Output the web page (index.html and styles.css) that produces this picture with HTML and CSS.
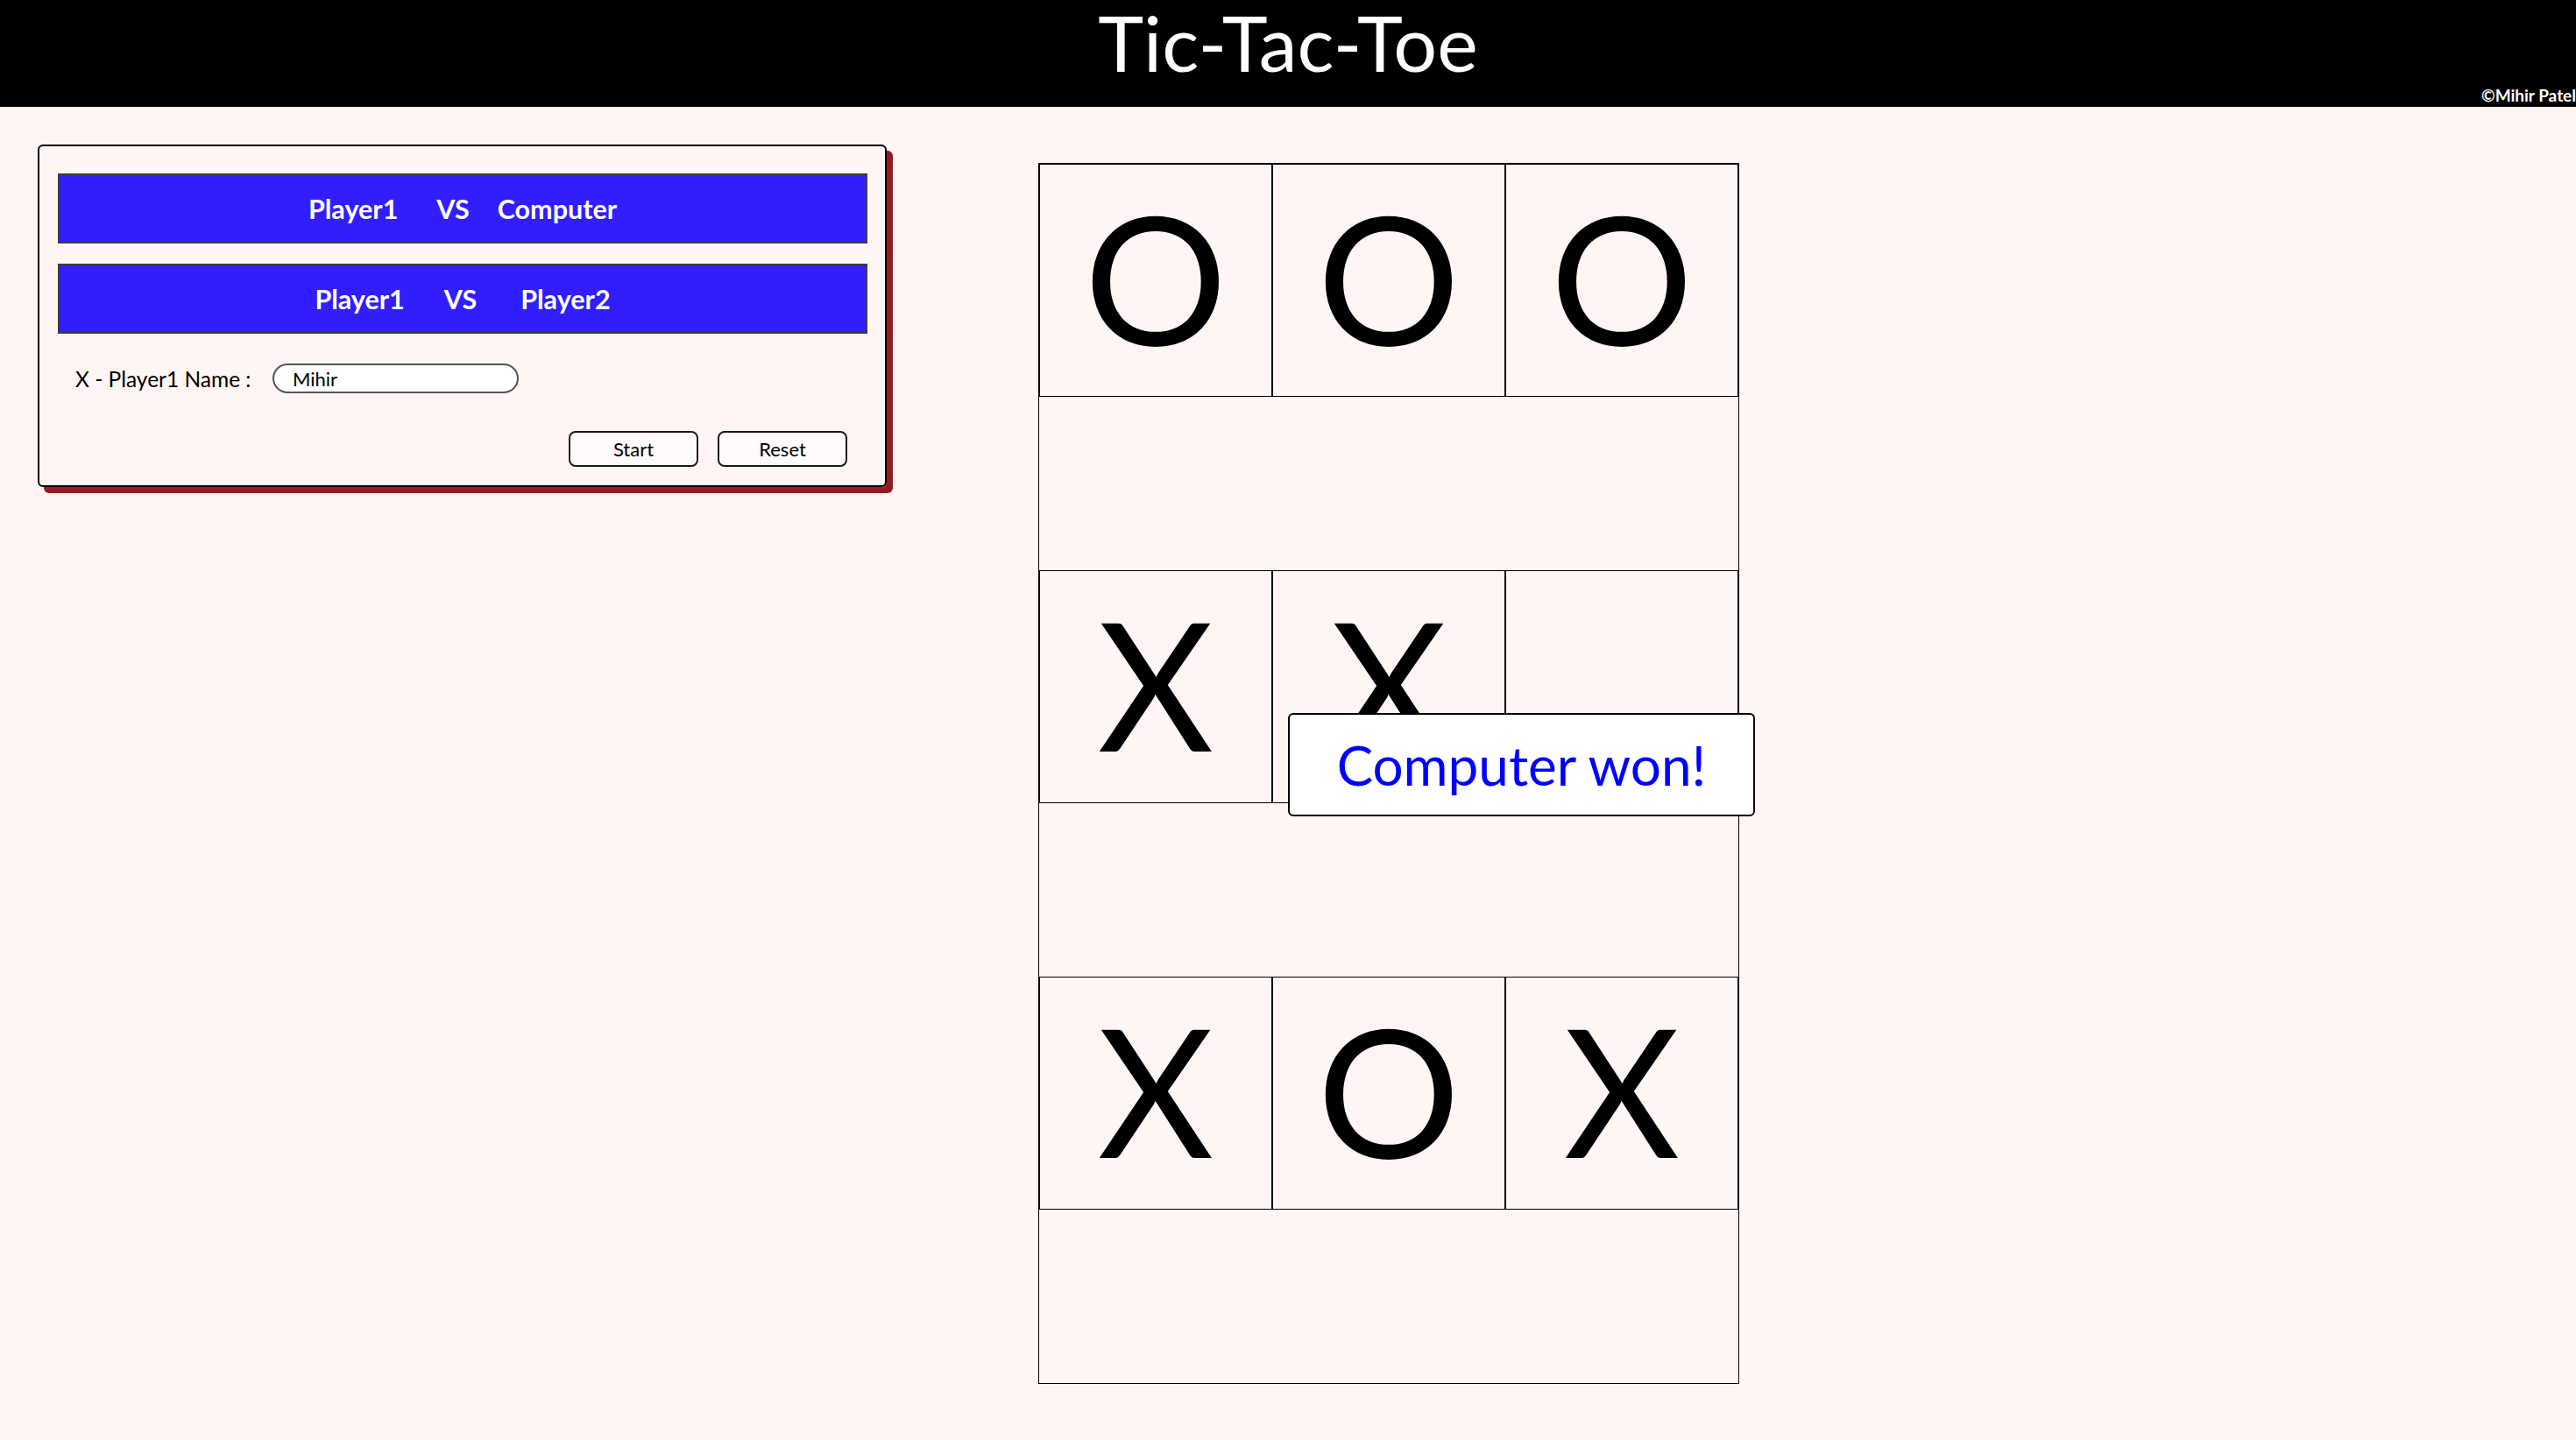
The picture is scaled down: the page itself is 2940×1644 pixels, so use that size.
FILE: index.html
```html
<!DOCTYPE html>
<html lang="en">
<head>
<meta charset="utf-8">
<title>Tic-Tac-Toe</title>
<link rel="stylesheet" href="styles.css">
</head>
<body>
<header class="topbar">
  <h1 class="title">Tic-Tac-Toe</h1>
  <div class="copy">©Mihir Patel</div>
</header>
<main class="layout">
  <section class="panel">
    <button class="mode"><span>Player1</span><span class="vs vs-a">VS</span><span>Computer</span></button>
    <button class="mode mode-second"><span>Player1</span><span class="vs vs-b">VS</span><span>Player2</span></button>
    <div class="name-row">
      <label class="name-label" for="p1">X - Player1 Name :</label>
      <input class="name-input" id="p1" type="text" value="Mihir">
    </div>
    <div class="actions">
      <button class="btn">Start</button>
      <button class="btn">Reset</button>
    </div>
  </section>
  <section class="board">
    <div class="row">
      <div class="cell">O</div>
      <div class="cell">O</div>
      <div class="cell">O</div>
    </div>
    <div class="row">
      <div class="cell">X</div>
      <div class="cell">X</div>
      <div class="cell"></div>
    </div>
    <div class="row">
      <div class="cell">X</div>
      <div class="cell">O</div>
      <div class="cell">X</div>
    </div>
    <div class="toast">Computer won!</div>
  </section>
</main>
</body>
</html>
```
FILE: styles.css
```css
html, body {
  margin: 0;
  padding: 0;
}
body {
  background: #fff5f3;
  font-family: Lato, "Open Sans", "Liberation Sans", sans-serif;
  color: #000;
}
.topbar {
  background: #000;
  height: 122px;
  display: flex;
  flex-direction: column;
}
.title {
  margin: 0;
  text-align: center;
  color: #fff;
  font-weight: 400;
  font-size: 88px;
  line-height: 97px;
}
.copy {
  text-align: right;
  color: #fff;
  font-size: 19px;
  line-height: 24px;
  font-weight: 700;
}
.layout {
  display: flex;
  align-items: flex-start;
  padding-left: 43px;
}
.panel {
  margin-top: 43px;
  width: 969px;
  box-sizing: border-box;
  border: 2px solid #000;
  border-radius: 6px;
  box-shadow: 7px 7px 0 #931b23;
  padding: 31px 20px 21px 21px;
  display: flex;
  flex-direction: column;
}
.mode {
  height: 80px;
  background: #311eff;
  border: 2px solid #3c3c3c;
  color: #fff;
  font-family: Lato, "Open Sans", sans-serif;
  font-weight: 700;
  font-size: 30.5px;
  display: flex;
  justify-content: center;
  align-items: center;
  padding: 0;
}
.mode-second {
  margin-top: 23px;
}
.vs-a {
  margin: 0 32px 0 44px;
}
.vs-b {
  margin: 0 50px 0 45px;
}
.name-row {
  margin-top: 34px;
  display: flex;
  align-items: center;
  padding-left: 20px;
}
.name-label {
  font-size: 24.5px;
  width: 201px;
  white-space: nowrap;
  margin-right: 24px;
}
.name-input {
  width: 281px;
  height: 34px;
  box-sizing: border-box;
  border: 2px solid #555;
  border-radius: 17px;
  padding: 0 0 0 21px;
  font-family: Lato, "Open Sans", sans-serif;
  font-size: 22px;
  background: #fff;
  color: #000;
}
.actions {
  margin-top: 43px;
  display: flex;
  justify-content: flex-end;
  gap: 22px;
  padding-right: 23px;
}
.btn {
  width: 148px;
  height: 41px;
  box-sizing: border-box;
  border: 2px solid #1a1a1a;
  border-radius: 8px;
  background: #fffafa;
  font-family: Lato, "Open Sans", sans-serif;
  font-size: 22px;
  color: #000;
  padding: 0;
}
.board {
  position: relative;
  margin-left: 173px;
  margin-top: 64px;
  border: 1px solid #000;
}
.row {
  height: 464px;
  display: flex;
  align-items: flex-start;
}
.cell {
  width: 266px;
  height: 266px;
  box-sizing: border-box;
  border: 1px solid #000;
  padding-bottom: 10px;
  display: flex;
  justify-content: center;
  align-items: center;
  font-size: 204px;
  line-height: 1;
}
.toast {
  position: absolute;
  left: 284px;
  top: 627px;
  width: 533px;
  height: 118px;
  box-sizing: border-box;
  border: 2px solid #000;
  border-radius: 6px;
  background: #fff;
  color: #0000ff;
  font-size: 62px;
  display: flex;
  justify-content: center;
  align-items: center;
}
```
